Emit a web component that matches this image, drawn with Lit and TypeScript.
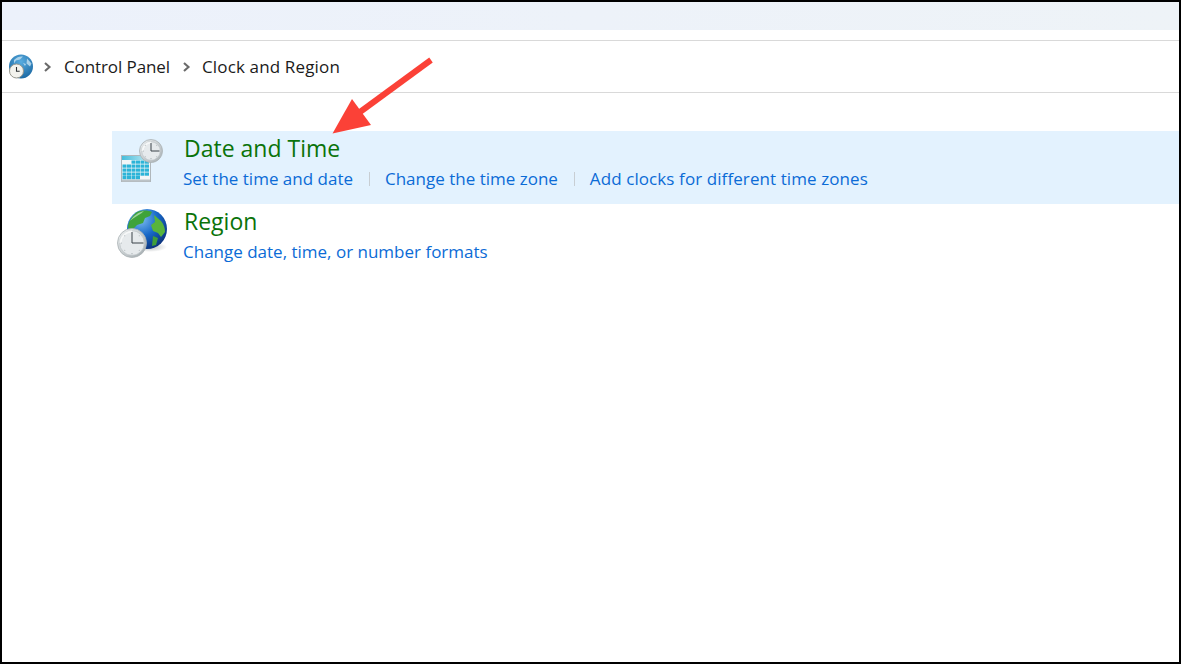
import { LitElement, html, css, svg } from "lit";
import { customElement } from "lit/decorators.js";

const clockFace = (cx: number, cy: number, r: number, id: string) => svg`
  <circle cx=${cx} cy=${cy} r=${r} fill="url(#${id})" stroke="#aab1b4" stroke-width=".8"/>
  <circle cx=${cx} cy=${cy} r=${r - 2.2} fill="#e6eaec" stroke="#b9bfc2" stroke-width=".6"/>
  <path d="M${cx - r + 3} ${cy}a${r - 3} ${r - 3} 0 0 1 ${r - 3} ${-(r - 3)}" fill="none" stroke="#fafbfb" stroke-width="2" opacity=".8"/>
  <g fill="#a3abaf">
    <circle cx=${cx} cy=${cy + r - 3.8} r=".6"/>
    <circle cx=${cx - r + 3.8} cy=${cy} r=".6"/>
    <circle cx=${cx - r * 0.5} cy=${cy + r * 0.5} r=".5"/><circle cx=${cx + r * 0.5} cy=${cy + r * 0.5} r=".5"/>
    <circle cx=${cx - r * 0.5} cy=${cy - r * 0.5} r=".5"/><circle cx=${cx + r * 0.5} cy=${cy - r * 0.5} r=".5"/>
  </g>
  <path d="M${cx} ${cy - r + 3.5}V${cy}H${cx + r - 3}" fill="none" stroke="#3a4248" stroke-width="1"/>`;

const calendarIcon = html`<svg class="icon" width="48" height="48" viewBox="0 0 48 48">
  <defs>
    <linearGradient id="cb" x1="0" y1="0" x2="1" y2="1"><stop offset="0" stop-color="#eef1f2"/><stop offset="1" stop-color="#a6aeb2"/></linearGradient>
    <linearGradient id="ch" x1="0" y1="0" x2="1" y2="0"><stop offset="0" stop-color="#45bddb"/><stop offset="1" stop-color="#c6ebf4"/></linearGradient>
  </defs>
  <rect x="2.500" y="17.500" width="29" height="26" fill="#f3f6f7" stroke="#b0b7bb"/>
  <rect x="3" y="18" width="28" height="4" fill="url(#ch)"/>
  <rect x="3" y="41.500" width="28" height="2" fill="#bcc3c7"/>
  <g fill="#2cb4d8">
    ${[22.5, 26.5, 30.5, 34.5, 38].map((y, row) =>
      [3.5, 8, 12.5, 17, 21.5, 26].map((x, col) =>
        (row === 4 && col > 3) || (row === 0 && col < 2) ? null : svg`<rect x=${x} y=${y} width="4" height="3.200" />`,
      ),
    )}
  </g>
  ${clockFace(32, 13, 11.5, "cb")}
</svg>`;

const globeIcon = html`<svg class="icon" width="52" height="52" viewBox="0 0 52 52">
  <defs>
    <radialGradient id="gb" cx=".35" cy=".25" r=".85"><stop offset="0" stop-color="#7ebdf0"/><stop offset=".5" stop-color="#1768c8"/><stop offset="1" stop-color="#0a2a70"/></radialGradient>
    <linearGradient id="gc" x1="0" y1="0" x2="1" y2="1"><stop offset="0" stop-color="#f0f3f4"/><stop offset="1" stop-color="#9fa8ac"/></linearGradient>
    <radialGradient id="gs"><stop offset="0" stop-color="#70787c" stop-opacity=".5"/><stop offset="1" stop-color="#70787c" stop-opacity="0"/></radialGradient>
  </defs>
  <ellipse cx="33" cy="38" rx="17" ry="5" fill="url(#gs)"/>
  <circle cx="30" cy="20" r="20" fill="url(#gb)"/>
  <path d="M20 3c5-2 11-2 15 0l-2 4-5 2-2 5-6 2-6 6-3-3c0-6 4-12 9-16Z" fill="#3fa33a"/>
  <path d="M37 6l7 6c3 4 4 7 4 11l-4 5-3-4-5-2-2-6 4-3Z" fill="#58b43c"/>
  <path d="M36 27l5 2-2 7-4 1Z" fill="#3f9e3a"/>
  <path d="M13 12c4-6 9-9 14-10-3 3-8 5-14 10Z" fill="#c6e6c6" opacity=".7"/>
  ${clockFace(15, 34, 14.5, "gc")}
</svg>`;

const navIcon = html`<svg class="nav-icon" width="26" height="26" viewBox="0 0 26 26">
  <defs>
    <radialGradient id="nb" cx=".5" cy=".3" r=".8"><stop offset="0" stop-color="#58ace0"/><stop offset="1" stop-color="#135f9a"/></radialGradient>
  </defs>
  <circle cx="12" cy="12.500" r="12" fill="url(#nb)"/>
  <path d="M5 6c3-3 6-4 9-3.500l-3 3-4 1-2 3Z M18 4.500l4.500 5-1.500 3-3.500-3Z M14 9l3 1-1 2Z" fill="#bcdcee" opacity=".85"/>
  <circle cx="7.500" cy="17" r="7" fill="#f3f3ee" stroke="#98988f"/>
  <path d="M7.500 13v4.300h3.200" fill="none" stroke="#2d3133" stroke-width="1.100"/>
</svg>`;

const chevron = html`<svg class="chev" width="8" height="10" viewBox="0 0 8 10"><path d="M1 1 5.500 5 1 9" fill="none" stroke="#6a6a6a" stroke-width="2.100"/></svg>`;

@customElement("app-root")
export class AppRoot extends LitElement {
  static styles = css`
    :host {
      display: block;
      width: 1181px;
      height: 664px;
      box-sizing: border-box;
      border: 2px solid #000;
      background: #fff;
      position: relative;
      overflow: hidden;
      font-family: "Open Sans", "Noto Sans", sans-serif;
    }
    .strip {
      height: 28px;
      background: linear-gradient(90deg, #ecf1fb, #eef3f7);
    }
    .gap {
      height: 10px;
    }
    .crumbs {
      box-sizing: border-box;
      border-top: 1px solid #d9d9d9;
      border-bottom: 1px solid #d9d9d9;
      height: 53px;
      display: flex;
      align-items: center;
      padding-left: 7px;
      font-size: 17px;
      color: #1b1b1b;
    }
    .crumb {
      letter-spacing: -0.1px;
    }
    .crumb.wide {
      letter-spacing: 0.15px;
      margin-left: -1px;
    }
    .nav-icon {
      margin-right: 9px;
    }
    .chev {
      margin-right: 12px;
    }
    .crumb + .chev {
      margin-left: 13px;
    }
    .list {
      margin: 38px 0 0 110px;
    }
    .row {
      height: 73px;
      display: flex;
      box-sizing: border-box;
    }
    .row.hover {
      background: #e3f2fe;
    }
    .icon-cell {
      width: 71px;
      flex: none;
      display: flex;
      padding-left: 5px;
      box-sizing: border-box;
    }
    .row.hover .icon {
      margin-top: 7px;
      margin-left: 2px;
    }
    .row:not(.hover) .icon {
      margin-top: 5px;
    }
    .title {
      font-size: 23px;
      line-height: 30px;
      margin: 2px 0 0 1px;
      color: #0a730a;
    }
    .links {
      display: flex;
      align-items: center;
      font-size: 17px;
      line-height: 24px;
      margin-top: 4px;
      color: #0b6bd6;
    }
    .link.long {
      letter-spacing: 0.09px;
    }
    .sep {
      width: 1px;
      height: 14px;
      background: #c8ced3;
      margin: 0 15px 0 16px;
    }
    .arrow {
      position: absolute;
      left: 0;
      top: 0;
    }
  `;

  private row(icon: unknown, title: string, links: string[], hover: boolean) {
    return html`<div class="row ${hover ? "hover" : ""}">
      <div class="icon-cell">${icon}</div>
      <div>
        <div class="title">${title}</div>
        <div class="links">
          ${links.map(
            (l, i) =>
              html`${i > 0 ? html`<span class="sep"></span>` : null}<span class="link ${i === 2 ? "long" : ""}">${l}</span>`,
          )}
        </div>
      </div>
    </div>`;
  }

  render() {
    return html`
      <div class="strip"></div>
      <div class="gap"></div>
      <div class="crumbs">
        ${navIcon}${chevron}<span class="crumb">Control Panel</span>${chevron}<span class="crumb wide">Clock and Region</span>
      </div>
      <div class="list">
        ${this.row(calendarIcon, "Date and Time", ["Set the time and date", "Change the time zone", "Add clocks for different time zones"], true)}
        ${this.row(globeIcon, "Region", ["Change date, time, or number formats"], false)}
      </div>
      <svg class="arrow" width="1177" height="660" viewBox="2 2 1177 660">
        <path d="M431 60 360 112" stroke="#fb4137" stroke-width="6" fill="none"/>
        <path d="M352 99 371 125 332.500 133.500Z" fill="#fb4137"/>
      </svg>
    `;
  }
}
